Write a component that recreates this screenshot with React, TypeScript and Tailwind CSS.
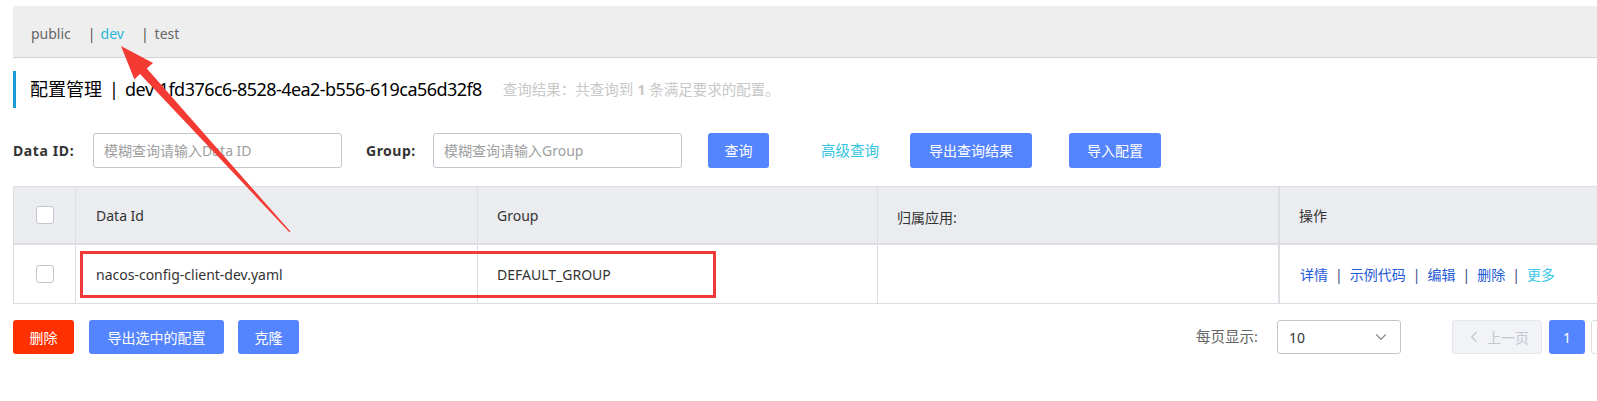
import { ChevronDown, ChevronLeft } from 'lucide-react'

const actions = ['详情', '示例代码', '编辑', '删除']

function Checkbox() {
  return (
    <span className="block w-[18px] h-[18px] bg-white border border-[#c4c6cf] rounded-[3px]" />
  )
}

function BlueButton({ label, className }: { label: string; className: string }) {
  return (
    <button
      className={`h-[35px] rounded-[3px] bg-[#5584ff] text-white text-[14px] flex items-center justify-center ${className}`}
    >
      {label}
    </button>
  )
}

export default function App() {
  return (
    <div className="relative w-full h-[401px] overflow-hidden bg-white font-['Noto_Sans','Noto_Sans_CJK_SC',sans-serif] text-[#333]">
      <div className="w-[1640px] pl-[13px]">
        {/* namespace bar */}
        <div className="mt-[6px] h-[52px] bg-[#eeeeee] border-b border-[#d2d2d2] flex items-center pl-[18px] pt-[3px] text-[14px] text-[#666]">
          <span>public</span>
          <span className="ml-[17px] text-[#555]">|</span>
          <span className="ml-[5px] text-[#2cb8dc]">dev</span>
          <span className="ml-[17px] text-[#555]">|</span>
          <span className="ml-[6px]">test</span>
        </div>

        {/* title */}
        <div className="mt-[13px] h-[37px] border-l-[3px] border-[#1a9bd7] flex items-center pl-[14px]">
          <span className="text-[18px] text-black">配置管理</span>
          <span className="text-[18px] text-black ml-[7px]">|</span>
          <span className="text-[18px] text-black ml-[6px] tracking-[-0.4px]">dev</span>
          <span className="text-[18px] text-black ml-[5px] tracking-[-0.55px]">
            1fd376c6-8528-4ea2-b556-619ca56d32f8
          </span>
          <span className="text-[14.5px] text-[#c8c8c8] ml-[21px]">
            查询结果：共查询到 <b className="font-bold">1</b> 条满足要求的配置。
          </span>
        </div>

        {/* search row */}
        <div className="mt-[25px] flex items-center h-[35px] text-[14px]">
          <span className="font-bold text-[#333] w-[63px] tracking-[0.6px]">Data ID:</span>
          <div className="ml-[17px] w-[249px] h-[35px] border border-[#c4c6cf] rounded-[3px] flex items-center pl-[10px] text-[14px] text-[#a0a0a0]">
            模糊查询请输入Data ID
          </div>
          <span className="ml-[24px] w-[53px] font-bold text-[#333] tracking-[0.5px]">Group:</span>
          <div className="ml-[14px] w-[249px] h-[35px] border border-[#c4c6cf] rounded-[3px] flex items-center pl-[10px] text-[14px] text-[#a0a0a0]">
            模糊查询请输入Group
          </div>
          <BlueButton label="查询" className="ml-[26px] w-[61px]" />
          <span className="ml-[52px] text-[14.5px] text-[#33c4de]">高级查询</span>
          <BlueButton label="导出查询结果" className="ml-[31px] w-[122px]" />
          <BlueButton label="导入配置" className="ml-[37px] w-[92px]" />
        </div>

        {/* table */}
        <div className="mt-[18px] border border-[#dcdee3] text-[14px]">
          <div className="flex h-[58px] bg-[#ebecf0] border-b-[2px] border-[#dcdee3]">
            <div className="w-[62px] flex items-center justify-center border-r border-[#dcdee3]">
              <Checkbox />
            </div>
            <div className="w-[402px] flex items-center pl-[20px] border-r border-[#dcdee3]">Data Id</div>
            <div className="w-[400px] flex items-center pl-[19px] border-r border-[#dcdee3]">Group</div>
            <div className="w-[402px] flex items-center pl-[19px] border-r-[2px] border-[#dcdee3] pt-[4px]">归属应用:</div>
            <div className="flex-1 flex items-center pl-[19px]">操作</div>
          </div>
          <div className="flex h-[58px] bg-white">
            <div className="w-[62px] flex items-center justify-center border-r border-[#dcdee3]">
              <Checkbox />
            </div>
            <div className="w-[402px] flex items-center pl-[20px] border-r border-[#dcdee3]">
              nacos-config-client-dev.yaml
            </div>
            <div className="w-[400px] flex items-center pl-[19px] border-r border-[#dcdee3]">DEFAULT_GROUP</div>
            <div className="w-[402px] border-r-[2px] border-[#dcdee3]" />
            <div className="flex-1 flex items-center pl-[20px]">
              {actions.map((a) => (
                <span key={a} className="flex items-center">
                  <span className="text-[#1f5ad6]">{a}</span>
                  <span className="mx-[7px] text-[#3a4a8a]">|</span>
                </span>
              ))}
              <span className="text-[#3cc8e6]">更多</span>
            </div>
          </div>
        </div>

        {/* footer */}
        <div className="mt-[16px] flex items-center h-[34px] text-[14px]">
          <button className="w-[61px] h-[34px] rounded-[3px] bg-[#ff3000] text-white">删除</button>
          <button className="ml-[15px] w-[135px] h-[34px] rounded-[3px] bg-[#5584ff] text-white">导出选中的配置</button>
          <button className="ml-[14px] w-[61px] h-[34px] rounded-[3px] bg-[#5584ff] text-white">克隆</button>
          <span className="ml-[897px] w-[67px] text-[14.5px] text-[#666]">每页显示:</span>
          <div className="ml-[14px] w-[124px] h-[34px] border border-[#c4c6cf] rounded-[3px] flex items-center justify-between pl-[11px] pr-[10px]">
            <span className="text-[#333]">10</span>
            <ChevronDown size={18} strokeWidth={1.5} className="text-[#888]" />
          </div>
          <div className="ml-[51px] w-[90px] h-[34px] border border-[#e6e7eb] bg-[#f2f3f7] rounded-[3px] flex items-center justify-center text-[#c4c6cf]">
            <ChevronLeft size={18} strokeWidth={1.5} />
            <span className="ml-[4px]">上一页</span>
          </div>
          <div className="ml-[7px] w-[36px] h-[34px] bg-[#5584ff] rounded-[3px] flex items-center justify-center text-white">1</div>
          <div className="ml-[6px] w-[36px] h-[34px] border border-[#dcdee3] rounded-[3px]" />
        </div>
      </div>

      {/* annotations */}
      <div className="absolute left-[80px] top-[251px] w-[636px] h-[47px] border-[3px] border-[#f03a3a]" />
      <svg className="absolute left-0 top-0 pointer-events-none" width="400" height="260">
        <polygon
          points="121,46 153,63 146.8,68.6 290.4,231.6 289.6,232.4 140,74 134.4,79.6"
          fill="#f33a33"
        />
      </svg>
    </div>
  )
}
